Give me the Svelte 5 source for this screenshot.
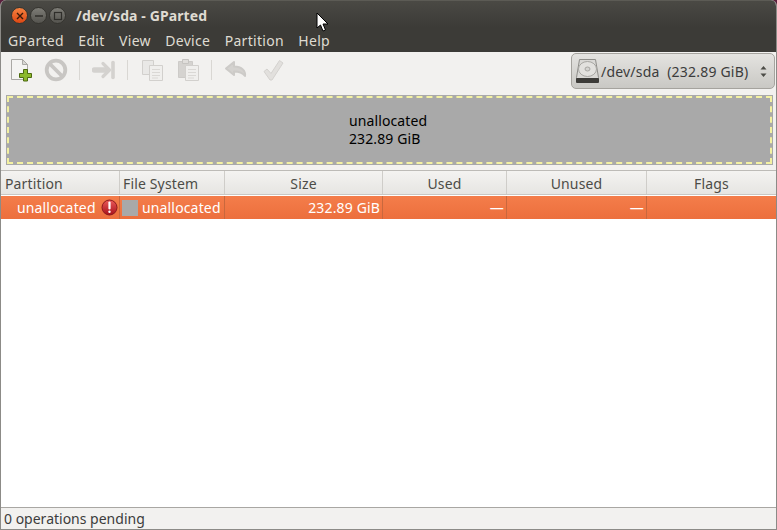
<script>
  const menus = ['GParted', 'Edit', 'View', 'Device', 'Partition', 'Help'];
</script>

<div class="window">
  <header class="titlebar">
    <div class="controls">
      <span class="wbtn close"><svg viewBox="0 0 8 8" width="8" height="8"><path d="M1 1l6 6M7 1l-6 6" stroke="#3a1a0a" stroke-width="1.4"/></svg></span>
      <span class="wbtn"><svg viewBox="0 0 10 8" width="10" height="8"><path d="M1 4h8" stroke="#2f2e2a" stroke-width="1.6"/></svg></span>
      <span class="wbtn"><svg viewBox="0 0 10 10" width="10" height="10"><rect x="1.5" y="1.5" width="7" height="7" fill="none" stroke="#2f2e2a" stroke-width="1.2"/></svg></span>
    </div>
    <span class="title">/dev/sda - GParted</span>
  </header>
  <nav class="menubar">
    {#each menus as m}<span class="menu">{m}</span>{/each}
  </nav>
  <div class="toolbar">
    <div class="tools">
      <svg class="ic" width="24" height="26" viewBox="0 0 24 26">
        <path d="M2.500 2.500h11l5 5v15h-16z" fill="#f4f4f2" stroke="#aaa9a5"/>
        <path d="M13.500 2.500v5h5z" fill="#d8d8d4" stroke="#aaa9a5"/>
        <path d="M14.500 13.500h4v4h4v4h-4v3.500h-4v-3.500h-4v-4h4z" transform="translate(0 -1)" fill="#8cb82a" stroke="#4d6a10"/>
      </svg>
      <svg class="ic" width="24" height="24" viewBox="0 0 24 24">
        <circle cx="12" cy="12" r="9.300" fill="none" stroke="#c8c6c3" stroke-width="3.800"/>
        <path d="M5.500 5.500l13 13" stroke="#c8c6c3" stroke-width="3.800"/>
      </svg>
      <i class="sep"></i>
      <svg class="ic" width="24" height="24" viewBox="0 0 24 24">
        <path d="M2.500 12h12" stroke="#d4d2cf" stroke-width="5.500" stroke-linecap="round"/>
        <path d="M11 5.500l6.500 6.500-6.500 6.500" fill="none" stroke="#d4d2cf" stroke-width="3.200" stroke-linejoin="round" stroke-linecap="round"/>
        <path d="M21 4.500v15" stroke="#d4d2cf" stroke-width="3.600" stroke-linecap="round"/>
      </svg>
      <i class="sep"></i>
      <svg class="ic wide" width="24" height="24" viewBox="0 0 24 24">
        <path d="M2.500 2.500h11v14h-11z" fill="#e9e8e6" stroke="#d2d0cd"/>
        <path d="M9.500 7.500h13v15h-13z" fill="#f0efed" stroke="#d2d0cd"/>
        <path d="M12 11.500h8M12 14.500h8M12 17.500h8M12 20h6" stroke="#dad8d5"/>
      </svg>
      <svg class="ic" width="24" height="24" viewBox="0 0 24 24">
        <path d="M2.500 3.500h14v16h-14z" fill="#d5d3d0" stroke="#cdcbc8"/>
        <path d="M6.500 1.500h6v4h-6z" fill="#e0dedb" stroke="#c6c4c1"/>
        <path d="M9.500 7.500h13v15h-13z" fill="#f0efed" stroke="#d2d0cd"/>
        <path d="M12 11.500h8M12 14.500h8M12 17.500h8M12 20h6" stroke="#dad8d5"/>
      </svg>
      <i class="sep"></i>
      <svg class="ic wider" width="24" height="24" viewBox="0 0 24 24">
        <path d="M10 4L2 10.500 10 17v-3.500c4.500 0 8 .5 11 4.500 .8-5-3-9.500-11-9.500z" fill="#d4d2cf" stroke="#cdcbc8" stroke-linejoin="round" stroke-width="2"/>
      </svg>
      <svg class="ic" width="24" height="24" viewBox="0 0 24 24">
        <path d="M3 13.500l3-2.500 4 4.500L18.500 2.500l3.500 2.500-11 17h-2z" fill="#e2e0dd" stroke="#d4d2cf" stroke-linejoin="round"/>
      </svg>
    </div>
    <div class="combo">
      <svg width="25" height="26" viewBox="0 0 25 26">
        <path d="M4.500 1.500h16l3 18v4h-22v-4z" fill="#d9d8d5" stroke="#8f8e8a" stroke-linejoin="round"/>
        <rect x="1" y="20" width="23" height="5" rx="1" fill="#3c3b38"/>
        <ellipse cx="12.500" cy="11" rx="9" ry="7.500" fill="#e2e1de" stroke="#a6a5a1"/>
        <ellipse cx="12.500" cy="11" rx="2.500" ry="2" fill="#d4d3d0" stroke="#a6a5a1"/>
      </svg>
      <span class="combotext">/dev/sda&nbsp;&nbsp;(232.89 GiB)</span>
      <svg class="arrows" width="7" height="13" viewBox="0 0 7 13"><path d="M3.500 1l3 3.500h-6zM3.500 12l3-3.500h-6z" fill="#4c4c47"/></svg>
    </div>
  </div>
  <section class="mapwrap">
    <div class="map">
      <div class="mapinner">
        <div class="maplabel">unallocated<br>232.89 GiB</div>
      </div>
    </div>
  </section>
  <div class="table">
    <div class="cols head">
      <div class="th left">Partition</div>
      <div class="th left">File System</div>
      <div class="th">Size</div>
      <div class="th">Used</div>
      <div class="th">Unused</div>
      <div class="th">Flags</div>
    </div>
    <div class="cols row">
      <div class="td partition">
        <span>unallocated</span>
        <svg width="17" height="17" viewBox="0 0 17 17">
          <defs><linearGradient id="red" x1="0" y1="0" x2="0" y2="1"><stop offset="0" stop-color="#ea5a5a"/><stop offset="1" stop-color="#a8101a"/></linearGradient></defs>
          <circle cx="8.500" cy="8.500" r="7.500" fill="url(#red)" stroke="#8c1a1e"/>
          <path d="M8.500 3.500v6" stroke="#fff" stroke-width="2.200" stroke-linecap="round"/>
          <circle cx="8.500" cy="12.800" r="1.200" fill="#fff"/>
        </svg>
      </div>
      <div class="td fs"><i class="swatch"></i><span>unallocated</span></div>
      <div class="td num">232.89 GiB</div>
      <div class="td num">—</div>
      <div class="td num">—</div>
      <div class="td"></div>
    </div>
    <div class="rest"></div>
  </div>
  <footer class="status">0 operations pending</footer>
  <svg class="cursor" width="13" height="20" viewBox="0 0 13 20">
    <path d="M1 1v15l3.500-3 2.500 6 2.500-1-2.500-6h5z" fill="#fff" stroke="#000" stroke-width="1" stroke-linejoin="round"/>
  </svg>
</div>

<style>
  :global(body) { margin: 0; background: #5a1f3c; }
  .window {
    position: relative;
    width: 777px;
    height: 530px;
    box-sizing: border-box;
    display: flex;
    flex-direction: column;
    overflow: hidden;
    font-family: "Noto Sans", sans-serif;
    font-size: 14px;
    color: #3c3c3c;
    background: #f2f1ef;
    border-radius: 6px 6px 0 0;
    border: 1px solid #8c8b87;
    border-top: 0;
  }
  .titlebar {
    height: 27px;
    flex: none;
    display: flex;
    align-items: center;
    padding: 3px 0 0 10px;
    box-sizing: border-box;
    background: linear-gradient(#4a4944, #3c3b37);
    border-top: 1px solid #5c5b55;
  }
  .controls { display: flex; gap: 2px; }
  .wbtn {
    width: 17px;
    height: 17px;
    box-sizing: border-box;
    border-radius: 50%;
    display: flex;
    align-items: center;
    justify-content: center;
    background: linear-gradient(#7d7c76, #55544f);
    border: 1px solid #35342f;
  }
  .wbtn.close { background: linear-gradient(#f5813f, #dd4814); }
  .title {
    margin-left: 10px;
    font-weight: 700;
    font-size: 14px;
    letter-spacing: .1px;
    color: #dfdbd2;
  }
  .menubar {
    height: 25px;
    flex: none;
    display: flex;
    align-items: center;
    padding: 1px 0 0 7px;
    box-sizing: border-box;
    gap: 14.400px;
    background: #3c3b37;
    color: #dfdbd2;
    letter-spacing: .3px;
  }
  .toolbar {
    height: 40px;
    flex: none;
    display: flex;
    align-items: center;
    justify-content: space-between;
    padding-right: 1px;
    box-sizing: border-box;
    background: #f2f1ef;
  }
  .tools { display: flex; align-items: center; padding: 0 0 4px 8px; }
  .ic { margin-right: 11px; flex: none; }
  .ic.wide { margin-right: 12px; }
  .ic.wider { margin-right: 13px; }
  .sep { width: 1px; height: 20px; background: #d9d7d3; margin: 0 12px 0 0; }
  .combo {
    width: 204px;
    height: 36px;
    margin-bottom: 2px;
    box-sizing: border-box;
    display: flex;
    align-items: center;
    padding: 0 7px 0 3px;
    border: 1px solid #a5a39e;
    border-radius: 5px;
    background: linear-gradient(#e4e3e0, #c9c8c4);
    color: #3c3c3c;
    white-space: nowrap;
    letter-spacing: .2px;
  }
  .combotext { flex: 1; margin-left: 1px; }
  .mapwrap { flex: none; padding: 3px 3px 5px 5px; }
  .map {
    height: 70px;
    box-sizing: border-box;
    padding: 1px;
    background: #a9a9a9;
    display: flex;
  }
  .mapinner {
    flex: 1;
    box-sizing: border-box;
    border: 2px dashed #f3f1a2;
    display: flex;
    align-items: center;
    justify-content: center;
    padding-right: 1px;
  }
  .maplabel { color: #000; line-height: 18px; width: 80px; white-space: nowrap; letter-spacing: .1px; }
  .table {
    flex: 1;
    display: flex;
    flex-direction: column;
    border-top: 1px solid #bdbbb7;
    border-bottom: 1px solid #a9a7a3;
    background: #fff;
    min-height: 0;
  }
  .cols { display: grid; grid-template-columns: 119px 105px 158px 124px 140px 1fr; flex: none; }
  .head { height: 24px; background: linear-gradient(#f4f3f1, #e6e5e2); border-bottom: 1px solid #c9c7c3; box-sizing: border-box; }
  .th {
    display: flex;
    align-items: center;
    justify-content: center;
    border-right: 1px solid #cfcdc9;
    color: #4c4c47;
    white-space: nowrap;
    letter-spacing: .15px;
    padding-top: 1px;
  }
  .th:last-child { border-right: 0; }
  .th.left { justify-content: flex-start; padding-left: 4px; }
  .th.left:nth-child(2) { padding-left: 3px; }
  .row { height: 23px; margin-top: 1px; background: linear-gradient(#f47d4a, #ec6f3d); color: #fff; letter-spacing: .15px; }
  .td {
    display: flex;
    align-items: center;
    border-right: 1px solid #c9683d;
    white-space: nowrap;
    min-width: 0;
  }
  .td:last-child { border-right: 0; }
  .partition { padding-left: 16px; gap: 5px; }
  .fs { padding-left: 2px; gap: 4px; }
  .swatch { width: 16px; height: 16px; background: #a9a9a9; flex: none; }
  .num { justify-content: flex-end; padding-right: 2px; }
  .rest { flex: 1; background: #fff; }
  .status {
    height: 21px;
    flex: none;
    display: flex;
    align-items: center;
    padding-left: 3px;
    color: #3c3c3c;
  }
  .cursor { position: absolute; left: 315px; top: 12px; }
</style>
